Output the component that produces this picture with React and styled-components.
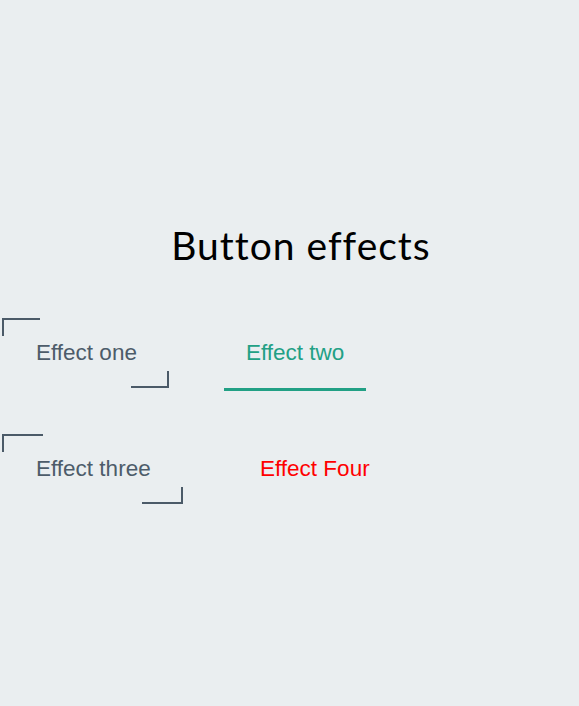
import React from 'react';
import styled, { createGlobalStyle, css } from 'styled-components';

const GlobalStyle = createGlobalStyle`
  html, body {
    margin: 0;
    padding: 0;
    background: #eaeef0;
  }
`;

const Page = styled.main`
  min-height: 100vh;
  box-sizing: border-box;
  padding-top: 226px;
`;

const Title = styled.h1`
  margin: 0 0 53px;
  padding-left: 23px;
  text-align: center;
  font-family: 'Lato', 'Noto Sans', sans-serif;
  font-weight: 400;
  font-size: 39px;
  line-height: 39px;
  letter-spacing: 1px;
  color: #000;
`;

const Grid = styled.div`
  display: grid;
  grid-template-columns: 222px max-content;
  row-gap: 46px;
  padding-left: 2px;
  justify-items: start;
`;

const cornerLines = css`
  &::before,
  &::after {
    content: '';
    position: absolute;
    box-sizing: border-box;
    width: 22.5%;
    height: 25%;
    border: 0 solid #4b5a68;
  }

  &::before {
    top: 0;
    left: 0;
    border-top-width: 2px;
    border-left-width: 2px;
  }

  &::after {
    right: 0;
    bottom: 0;
    border-right-width: 2px;
    border-bottom-width: 2px;
  }
`;

const underline = css`
  &::after {
    content: '';
    position: absolute;
    left: 0;
    right: 0;
    bottom: -3px;
    height: 3px;
    background: #22a085;
  }
`;

const paddings = {
  corners: '22px 32px 22px 34px',
  underline: '22px 22px 22px',
  plain: '22px 33px 22px 36px',
};

const Button = styled.button`
  position: relative;
  display: inline-block;
  padding: ${p => paddings[p.$variant]};
  border: none;
  background: transparent;
  font-family: 'Liberation Sans', Arial, sans-serif;
  font-size: 22.5px;
  line-height: 26px;
  color: ${p => p.$color || '#4d5c6a'};
  cursor: pointer;

  ${p => p.$variant === 'corners' && cornerLines}
  ${p => p.$variant === 'underline' && underline}
`;

const buttons = [
  { label: 'Effect one', variant: 'corners' },
  { label: 'Effect two', variant: 'underline', color: '#22a085' },
  { label: 'Effect three', variant: 'corners' },
  { label: 'Effect Four', variant: 'plain', color: '#ff0000' },
];

export default function App() {
  return (
    <>
      <GlobalStyle />
      <Page>
        <Title>Button effects</Title>
        <Grid>
          {buttons.map(b => (
            <Button key={b.label} $variant={b.variant} $color={b.color}>
              {b.label}
            </Button>
          ))}
        </Grid>
      </Page>
    </>
  );
}
